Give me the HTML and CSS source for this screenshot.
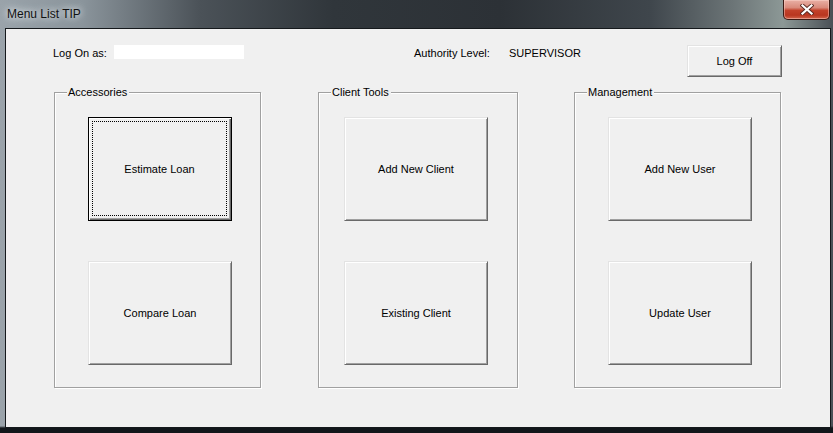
FILE: index.html
```html
<!DOCTYPE html>
<html>
<head>
<meta charset="utf-8">
<link rel="stylesheet" href="styles.css">
</head>
<body>
<div class="window">
  <div class="titlebar">
    <span class="title">Menu List TIP</span>
    <div class="close">
      <svg width="14" height="11" viewBox="0 0 14 11">
        <path d="M2.5 1.5 L11.5 9.5 M11.5 1.5 L2.5 9.5" stroke="#5a2a22" stroke-width="4" stroke-linecap="square" fill="none"/>
        <path d="M2.5 1.5 L11.5 9.5 M11.5 1.5 L2.5 9.5" stroke="#ffffff" stroke-width="2.2" stroke-linecap="square" fill="none"/>
      </svg>
    </div>
  </div>
  <div class="client">
    <div class="toprow">
      <span class="lbl logon">Log On as:</span>
      <span class="textbox"></span>
      <span class="lbl auth">Authority Level:</span>
      <span class="lbl level">SUPERVISOR</span>
      <button class="btn logoff">Log Off</button>
    </div>
    <div class="groups">
      <div class="group g-acc">
        <span class="legend">Accessories</span>
        <button class="btn big focused"><span class="focus-rect">Estimate Loan</span></button>
        <button class="btn big">Compare Loan</button>
      </div>
      <div class="group g-client">
        <span class="legend">Client Tools</span>
        <button class="btn big">Add New Client</button>
        <button class="btn big">Existing Client</button>
      </div>
      <div class="group g-mgmt">
        <span class="legend">Management</span>
        <button class="btn big">Add New User</button>
        <button class="btn big">Update User</button>
      </div>
    </div>
  </div>
</div>
</body>
</html>
```
FILE: styles.css
```css
* { box-sizing: border-box; }
html, body { margin: 0; padding: 0; }
body {
  width: 833px;
  height: 433px;
  overflow: hidden;
  background: #1c2126;
  font-family: Tahoma, "DejaVu Sans", "Liberation Sans", Arial, sans-serif;
}
.window {
  width: 833px;
  height: 433px;
  background:
    linear-gradient(180deg, rgba(0,0,0,0) 0, rgba(0,0,0,0) 426px, #11161a 428px, #11161a 433px),
    linear-gradient(90deg, #9aa3aa 0, #8a949b 10%, #4b5258 24%, #30363b 40%, #2c3136 60%, #3f464c 78%, #6c7577 88%, #8c9896 94%, #4a5056 100%);
}
.titlebar {
  height: 28px;
  display: flex;
  justify-content: space-between;
  align-items: flex-start;
}
.title {
  padding: 7px 0 0 7px;
  font-family: "Liberation Sans", Arial, sans-serif;
  font-size: 12px;
  line-height: 14px;
  color: #111;
  text-shadow: 0 0 6px rgba(235,240,245,0.95), 0 0 10px rgba(235,240,245,0.8);
}
.close {
  width: 47px;
  height: 20px;
  margin-right: 3px;
  border: 1px solid #3b1a14;
  border-top: none;
  border-radius: 0 0 5px 5px;
  background: linear-gradient(180deg, #e9b0a5 0, #d98a7b 40%, #c2412a 55%, #b93620 80%, #d2654c 100%);
  box-shadow: inset 0 0 0 1px rgba(255,220,210,0.45);
  display: flex;
  align-items: center;
  justify-content: center;
}
.close svg { display: block; }
.client {
  margin-left: 5px;
  width: 826px;
  height: 400px;
  border: 1px solid #15191c;
  background: #f0f0f0;
  font-family: "Liberation Sans", Arial, sans-serif;
  font-size: 11px;
  color: #000;
}
.btn {
  font-family: "Liberation Sans", Arial, sans-serif;
  font-size: 11px;
  color: #000;
  background: #f0f0f0;
  border: 1px solid;
  border-color: #e3e3e3 #696969 #696969 #e3e3e3;
  box-shadow: inset 1px 1px 0 #fff, inset -1px -1px 0 #a0a0a0;
  padding: 0;
  margin: 0;
  display: flex;
  align-items: center;
  justify-content: center;
}
.toprow {
  display: flex;
  align-items: flex-start;
  padding: 16px 48px 0 47px;
  height: 48px;
}
.lbl {
  padding-top: 1px;
  line-height: 14px;
  white-space: nowrap;
}
.logon { width: 61px; }
.textbox {
  width: 130px;
  height: 14px;
  background: #fff;
}
.auth { margin-left: 170px; width: 95px; }
.toprow .logoff {
  margin-left: auto;
  width: 95px;
  height: 32px;
}
.groups {
  display: flex;
  padding-left: 48px;
  margin-top: 15px;
}
.group {
  position: relative;
  height: 296px;
  border: 1px solid #a0a0a0;
  box-shadow: inset 1px 1px 0 #fff, 1px 1px 0 #fff;
  display: flex;
  flex-direction: column;
  gap: 40px;
  padding-top: 24px;
}
.g-acc { width: 207px; padding-left: 33px; }
.g-client { width: 200px; margin-left: 57px; padding-left: 25px; }
.g-mgmt { width: 207px; margin-left: 56px; padding-left: 33px; }
.legend {
  position: absolute;
  top: -8px;
  left: 12px;
  padding: 0 2px 0 1px;
  background: #f0f0f0;
  line-height: 14px;
}
.big {
  width: 144px;
  height: 104px;
}
.btn.focused {
  border: 1px solid #000;
  box-shadow: inset 1px 1px 0 #fff, inset -1px -1px 0 #696969, inset -2px -2px 0 #a0a0a0;
  padding: 3px 4px 4px 3px;
  align-items: stretch;
  justify-content: stretch;
}
.focus-rect {
  flex: 1;
  border: 1px dotted #000;
  display: flex;
  align-items: center;
  justify-content: center;
}
```
